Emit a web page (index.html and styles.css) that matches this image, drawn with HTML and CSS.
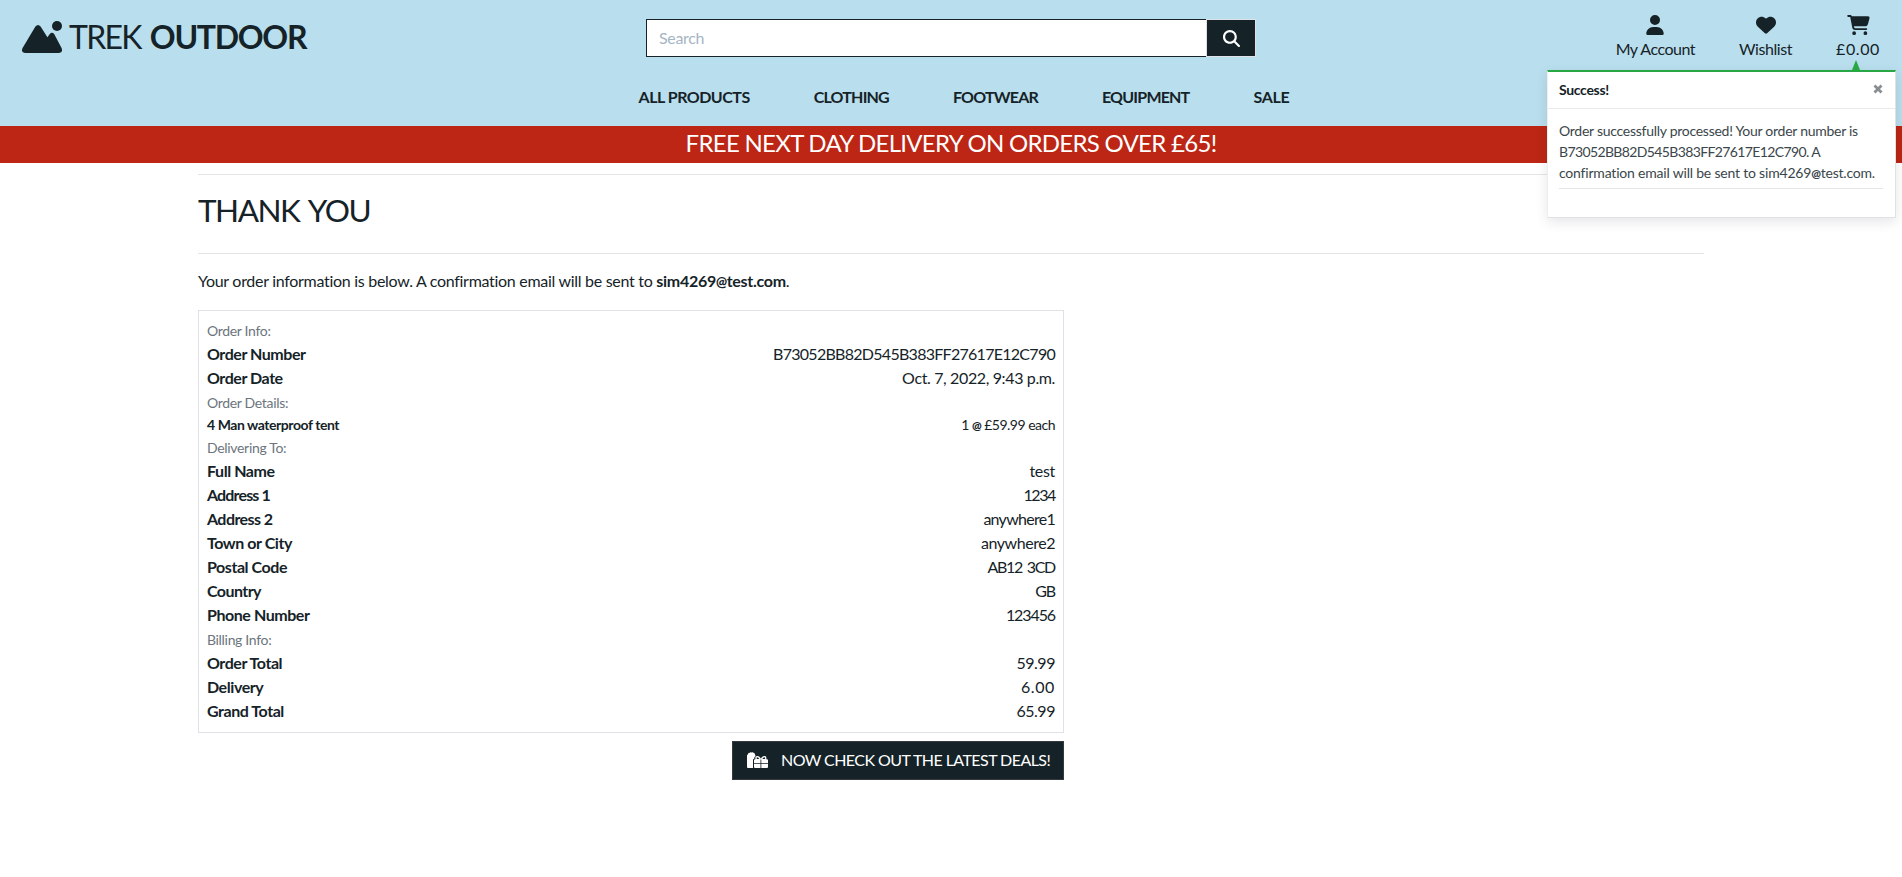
FILE: index.html
```html
<!DOCTYPE html>
<html lang="en">
<head>
<meta charset="utf-8">
<title>Trek Outdoor</title>
<link rel="stylesheet" href="styles.css">
</head>
<body>
<header class="site-header">
  <div class="top-row">
    <a class="logo">
      <svg class="logo-icon" viewBox="0 0 40 32"><circle cx="35" cy="5" r="5"/><path d="M13.4 5.4Q16 2.400 18.6 5.400L25.400 16.200L27.600 13.200Q30 10.400 32.300 13.200L39.300 26.600Q41.600 31.600 37 32H3Q-1.500 31.400 .6 27Z"/></svg>
      <span class="logo-thin">TREK</span><span class="logo-bold">OUTDOOR</span>
    </a>
    <form class="search">
      <input class="search-input" type="text" placeholder="Search">
      <button class="search-btn" type="button"><svg class="search-icon" viewBox="0 0 512 512"><path d="M416 208c0 45.900-14.900 88.300-40 122.700L502.600 457.400c12.500 12.500 12.500 32.800 0 45.300s-32.800 12.500-45.300 0L330.700 376c-34.400 25.200-76.800 40-122.700 40C93.100 416 0 322.900 0 208S93.100 0 208 0S416 93.100 416 208zM208 352a144 144 0 1 0 0-288 144 144 0 1 0 0 288z"/></svg></button>
    </form>
    <div class="actions">
      <a class="action"><svg class="icon-user" viewBox="0 0 448 512"><path d="M224 256A128 128 0 1 0 224 0a128 128 0 1 0 0 256zm-45.700 48C79.800 304 0 383.800 0 482.300C0 498.700 13.300 512 29.700 512H418.300c16.400 0 29.700-13.300 29.700-29.700C448 383.800 368.200 304 269.700 304H178.300z"/></svg><span class="t-account">My Account</span></a>
      <a class="action"><svg class="icon-heart" viewBox="0 0 512 512"><path d="M47.600 300.400L228.300 469.100c7.500 7 17.400 10.900 27.700 10.900s20.200-3.900 27.700-10.900L464.400 300.400c30.400-28.300 47.600-68 47.600-109.500v-5.800c0-69.900-50.500-129.500-119.400-141C347 36.500 300.600 51.400 268 84L256 96 244 84c-32.600-32.600-79-47.500-124.600-39.900C50.500 55.600 0 115.200 0 185.100v5.800c0 41.500 17.200 81.200 47.600 109.500z"/></svg><span class="t-wish">Wishlist</span></a>
      <a class="action"><svg class="icon-cart" viewBox="0 0 576 512"><path d="M0 24C0 10.700 10.700 0 24 0H69.500c22 0 41.500 12.800 50.600 32h411c26.300 0 45.500 25 38.600 50.400l-41 152.300c-8.500 31.400-37 53.300-69.500 53.300H170.700l5.400 28.500c2.200 11.300 12.100 19.500 23.600 19.500H488c13.300 0 24 10.700 24 24s-10.700 24-24 24H199.700c-34.600 0-64.300-24.600-70.700-58.500L77.400 54.500c-.7-3.800-4-6.500-7.900-6.500H24C10.700 48 0 37.300 0 24zM128 464a48 48 0 1 1 96 0 48 48 0 1 1 -96 0zm336-48a48 48 0 1 1 0 96 48 48 0 1 1 0-96z"/></svg><span class="t-total">£0.00</span></a>
    </div>
  </div>
  <nav class="nav">
    <a>ALL PRODUCTS</a><a class="t-nav-tight">CLOTHING</a><a class="t-nav-tight">FOOTWEAR</a><a class="t-nav-tight">EQUIPMENT</a><a class="t-sale">SALE</a>
  </nav>
</header>
<div class="banner">FREE NEXT DAY DELIVERY ON ORDERS OVER £65!</div>

<main class="container">
  <h2 class="title">THANK YOU</h2>
  <p class="intro">Your order information is below. A confirmation email will be sent to <strong>sim4269<span class="at">@</span>test.com</strong>.</p>
  <section class="order">
    <p class="group"><small>Order Info:</small></p>
    <div class="row"><strong>Order Number</strong><span class="v-code">B73052BB82D545B383FF27617E12C790</span></div>
    <div class="row"><strong>Order Date</strong><span class="v-date">Oct. 7, 2022, 9:43 p.m.</span></div>
    <p class="group"><small>Order Details:</small></p>
    <div class="row row-small"><strong>4 Man waterproof tent</strong><span class="v-item">1 <span class="at">@</span> £59.99 each</span></div>
    <p class="group"><small>Delivering To:</small></p>
    <div class="row"><strong>Full Name</strong><span>test</span></div>
    <div class="row"><strong class="l-tight">Address 1</strong><span class="v-narrow">1234</span></div>
    <div class="row"><strong class="l-mid">Address 2</strong><span class="v-code">anywhere1</span></div>
    <div class="row"><strong>Town or City</strong><span class="v-price">anywhere2</span></div>
    <div class="row"><strong>Postal Code</strong><span class="v-digits v-postcode">AB12 3CD</span></div>
    <div class="row"><strong class="l-mid">Country</strong><span class="v-digits">GB</span></div>
    <div class="row"><strong>Phone Number</strong><span class="v-digits">123456</span></div>
    <p class="group"><small>Billing Info:</small></p>
    <div class="row"><strong>Order Total</strong><span class="v-price">59.99</span></div>
    <div class="row"><strong>Delivery</strong><span class="v-wide">6.00</span></div>
    <div class="row"><strong>Grand Total</strong><span class="v-price">65.99</span></div>
  </section>
  <div class="cta-row">
    <a class="cta"><svg class="gift-icon" viewBox="0 0 21 16"><path d="M0 3.500Q0 2.500 1 2.500Q1 .5 2.500 .9Q3.500-.4 4.600 .5Q6-.2 6.800 1Q8.300 1.200 8 2.700L8.600 4Q7 5 7.300 6.500L6 7.500V16H1Q0 16 0 15Z"/><path d="M7 8.300Q7 7.300 8 7.300H8.600Q7.600 4.200 10 4Q12.200 3.800 13.800 6.400Q15.600 3.800 17.800 4Q20 4.300 19.200 7.300H20Q21 7.300 21 8.300V11H14.300V7.500H13.500V11H7ZM7 11.800H13.500V16H8Q7 16 7 15ZM14.300 11.800H21V15Q21 16 20 16H14.300Z"/><path class="gift-bow" d="M9.800 5.400Q11.300 5 12.300 7H10Q9.200 6 9.800 5.400ZM17.800 5.400Q16.500 5 15.300 7H17.800Q18.500 6 17.800 5.400Z"/></svg><span>NOW CHECK OUT THE LATEST DEALS!</span></a>
  </div>
</main>

<aside class="toast">
  <span class="toast-arrow"></span>
  <div class="toast-head"><strong>Success!</strong><svg class="close-icon" viewBox="0 0 10 10"><path d="M1.500 1.500L8.500 8.500M8.500 1.500L1.500 8.500"/></svg></div>
  <div class="toast-body">
    <p><span class="t-first">Order successfully processed! Your order number is</span><br><span class="t-code">B73052BB82D545B383FF27617E12C790. A</span><br><span class="t-last">confirmation email will be sent to sim4269<span class="at">@</span>test.com.</span></p>
  </div>
</aside>
</body>
</html>
```
FILE: styles.css
```css
* { box-sizing: border-box; }
body {
  margin: 0;
  background: #fff;
  color: #152328;
  font: 400 16px/24px Lato, sans-serif;
  letter-spacing: -0.32px;
}
p, h2 { margin: 0; }
svg { display: block; fill: #152328; }
.at { font-weight: 900; font-size: .82em; line-height: 0; }

/* Header */
.site-header { height: 126px; background: #b9deed; }
.top-row { display: grid; grid-template-columns: 1fr 610px 1fr; align-items: start; height: 85px; }
.logo { display: flex; align-items: center; height: 38px; margin: 18px 0 0 22px; font-size: 32px; line-height: 38px; }
.logo-icon { width: 40px; height: 32px; margin-right: 7px; }
.logo-thin { letter-spacing: -1.7px; margin-right: 9px; }
.logo-bold { font-weight: 700; letter-spacing: -1.3px; }
.search { display: flex; height: 38px; margin-top: 19px; }
.search-input {
  flex: 1; min-width: 0; padding: 0 12px 2px;
  border: 1px solid #152328; border-right: 0; border-radius: 0;
  font: 16px Lato, sans-serif; letter-spacing: -0.35px; outline: 0;
}
.search-input::placeholder { color: #a6b5c4; opacity: 1; }
.search-btn {
  display: flex; align-items: center; justify-content: center;
  width: 50px; padding: 0; border: 1px solid #dee2e6; background: #152328;
}
.search-icon { width: 17px; height: 17px; fill: #fff; }
.actions { display: flex; justify-content: flex-end; gap: 44px; padding: 15px 22px 0 0; }
.action { display: flex; flex-direction: column; align-items: center; gap: 2px; }
.icon-user { width: 18px; height: 20px; }
.icon-heart { width: 20px; height: 20px; }
.icon-cart { width: 23px; height: 20px; }
.t-account { letter-spacing: -0.5px; }
.t-wish { letter-spacing: -0.42px; }
.t-total { letter-spacing: 0.6px; }
.nav { display: flex; justify-content: center; gap: 64px; padding-left: 26px; font-weight: 700; letter-spacing: -0.5px; }
.t-nav-tight { letter-spacing: -0.8px; }
.t-sale { letter-spacing: -0.3px; }
.banner {
  height: 37px; padding-top: 2px; background: #bd2614; color: #fff;
  font-size: 24px; line-height: 29px; letter-spacing: -0.71px; text-align: center;
}

/* Order confirmation */
.container { width: 1506px; margin: 11px auto 0; border-top: 1px solid #e3e5e6; }
.title {
  height: 79px; padding-top: 16px; border-bottom: 1px solid #e3e5e6;
  font-size: 31.500px; font-weight: 400; line-height: 38px; letter-spacing: -1.5px; word-spacing: 3px;
}
.intro { height: 56px; padding-top: 15px; letter-spacing: -0.29px; }
.order { width: 866px; padding: 7px 8px 9px; border: 1px solid #dee2e6; }
.group { height: 24px; }
.group small { font-size: 14px; line-height: 1; color: #6c757d; }
.row { display: flex; justify-content: space-between; }
.row strong { letter-spacing: -0.44px; }
.row-small { height: 21px; font-size: 14px; line-height: 21px; }
.row .l-tight { letter-spacing: -0.85px; }
.row .l-mid { letter-spacing: -0.57px; }
.v-code { letter-spacing: -0.72px; }
.v-date { letter-spacing: -0.37px; }
.v-item { letter-spacing: -0.5px; }
.v-narrow { letter-spacing: -1.4px; }
.v-digits { letter-spacing: -1.1px; }
.v-postcode { letter-spacing: -1.3px; word-spacing: 2px; }
.v-price { letter-spacing: -0.46px; }
.v-wide { letter-spacing: 0.6px; }
.cta-row { display: flex; justify-content: flex-end; width: 866px; margin-top: 8px; }
.cta {
  display: flex; width: 332px; height: 39px; padding: 6px 0 0 14px;
  border: 1px solid #343a40; background: #152328; color: #fff;
  letter-spacing: -0.56px; white-space: nowrap;
}
.gift-icon { width: 21px; height: 16px; margin: 4px 13px 0 0; fill: #fff; }
.gift-bow { fill: #152328; }

/* Notification */
.toast {
  position: absolute; top: 70px; left: 1547px; width: 349px; height: 148px;
  background: #fff; border: 1px solid #dfe2e4; border-top: 2px solid #28a745; border-left-color: #eceeef;
  box-shadow: 0 4px 12px rgba(0, 0, 0, .1);
  font-size: 14px; line-height: 21px;
}
.toast-arrow {
  position: absolute; top: -12px; right: 35px;
  border: 4.500px solid transparent; border-top: 0; border-bottom: 10px solid #28a745;
}
.toast-head { display: flex; justify-content: space-between; height: 37px; padding: 7px 12px 0 11px; border-bottom: 1px solid #e8eaeb; }
.close-icon { width: 10px; height: 10px; margin-top: 5px; fill: none; stroke: #878d91; stroke-width: 2.800; }
.toast-body { padding: 11px 12px 0 11px; color: #3a464a; white-space: nowrap; }
.toast-body p { height: 69px; border-bottom: 1px solid #e3e5e6; }
.t-first { letter-spacing: -0.27px; }
.t-code { letter-spacing: -0.62px; }
.t-last { letter-spacing: -0.2px; }
```
